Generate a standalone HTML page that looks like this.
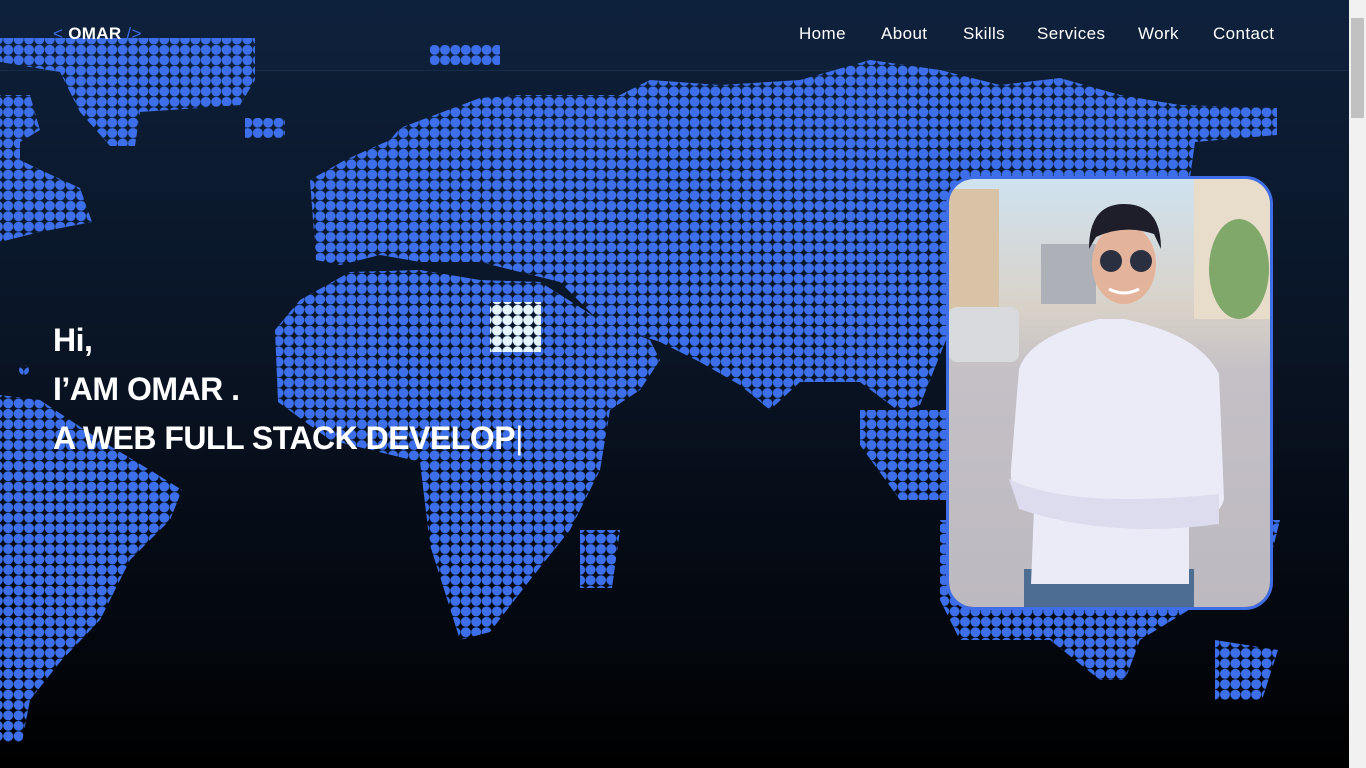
<!DOCTYPE html>
<html><head><meta charset="utf-8"><style>
html,body{margin:0;padding:0;width:1366px;height:768px;overflow:hidden;font-family:"Liberation Sans",sans-serif;}
body{background:linear-gradient(180deg,#0d1f38 0%,#0a1628 40%,#04080f 80%,#000 100%);position:relative}
.navbg{position:absolute;left:0;top:0;width:1349px;height:70px;background:rgba(20,40,70,0.25);border-bottom:1px solid rgba(40,70,110,0.35);z-index:0}
.nav{position:absolute;left:0;top:0;width:1349px;height:70px;z-index:3}
.logo{position:absolute;left:53px;top:24px;font-weight:bold;font-size:17px;color:#fff;letter-spacing:0.3px}
.logo .b{color:#3b6ee8;font-weight:normal}
.menu a{position:absolute;top:24px;color:#fff;font-size:17px;text-decoration:none;letter-spacing:0.4px}
.hero{position:absolute;left:53px;top:316px;color:#fff;font-weight:bold;font-size:32px;line-height:49px;z-index:3;letter-spacing:-0.5px}
.sb{position:absolute;right:0;top:0;width:17px;height:768px;background:#f1f1f1;z-index:4}
.sb div{position:absolute;left:2px;top:18px;width:13px;height:100px;background:#c1c1c1}
.photo{position:absolute;left:946px;top:176px;width:321px;height:428px;border:3px solid #3f6ee8;border-radius:28px;overflow:hidden;z-index:2}
</style></head><body>
<div class="navbg"></div>
<svg width="1366" height="768" style="position:absolute;left:0;top:0;z-index:1">
<defs>
<pattern id="d" width="10.4" height="10.4" patternUnits="userSpaceOnUse" x="3" y="3"><circle cx="5.2" cy="5.2" r="5" fill="#3c6fe9"/></pattern>
<pattern id="w" width="10.4" height="10.4" patternUnits="userSpaceOnUse" x="3" y="3"><circle cx="5.2" cy="5.2" r="5" fill="#e6f4fb"/></pattern>
</defs>
<g fill="url(#d)">
<polygon points="0,38 255,38 255,80 240,105 200,108 140,112 135,146 110,146 80,112 60,72 0,62"/>
<polygon points="245,118 285,118 285,138 245,138"/>
<polygon points="0,95 30,95 40,130 20,142 20,160 45,172 80,188 92,222 40,232 0,242"/>
<polygon points="0,395 40,400 100,440 150,470 182,490 170,520 130,560 100,620 60,662 30,700 22,742 0,742"/>
<polygon points="430,45 500,45 500,65 430,65"/>
<polygon points="310,180 345,160 390,140 400,128 480,98 520,95 620,95 650,80 720,85 800,80 870,60 940,70 1000,85 1060,78 1120,95 1180,105 1277,108 1277,135 1195,142 1190,178 1160,190 1100,182 1040,220 960,260 950,330 920,405 900,412 860,382 800,382 770,410 740,385 700,362 660,342 600,322 560,282 480,262 420,262 380,255 340,265 316,260"/>
<polygon points="300,300 350,272 420,270 480,280 540,282 600,320 650,340 660,360 640,390 610,410 600,470 570,530 530,580 490,632 460,640 430,545 420,462 330,440 278,402 275,330"/>
<polygon points="580,530 620,530 612,588 580,588"/>
<polygon points="860,410 960,410 960,500 900,500 860,445"/>
<polygon points="940,520 1280,520 1270,560 1140,640 1125,680 1100,680 1050,640 960,640 940,600"/>
<polygon points="1215,640 1278,650 1262,700 1215,700"/>
<circle cx="24" cy="370" r="5"/>
</g>
<polygon points="490,302 541,302 541,352 490,352" fill="url(#w)"/>
</svg>
<div class="nav">
<div class="logo"><span class="b">&lt;</span> OMAR <span class="b">/&gt;</span></div>
<div class="menu"><a style="left:799px">Home</a><a style="left:881px">About</a><a style="left:963px">Skills</a><a style="left:1037px">Services</a><a style="left:1138px">Work</a><a style="left:1213px">Contact</a></div>
</div>
<div class="hero">Hi,<br>I’AM OMAR .<br>A WEB FULL STACK DEVELOP<span style="font-weight:normal">|</span></div>
<div class="photo">
<svg width="321" height="428">
<defs>
<linearGradient id="bg" x1="0" y1="0" x2="0" y2="1"><stop offset="0" stop-color="#cfe2ef"/><stop offset="0.3" stop-color="#d9d2c8"/><stop offset="0.45" stop-color="#c4c0c6"/><stop offset="1" stop-color="#bdb9c0"/></linearGradient>
</defs>
<rect width="321" height="428" fill="url(#bg)"/>
<rect x="0" y="10" width="50" height="120" fill="#d8c3a6"/>
<rect x="245" y="0" width="76" height="140" fill="#e8dccb"/>
<ellipse cx="290" cy="90" rx="30" ry="50" fill="#7fa86a"/>
<rect x="92" y="65" width="55" height="60" fill="#aeb0b8"/>
<rect x="0" y="128" width="70" height="55" rx="8" fill="#d8dade"/>
<rect x="260" y="195" width="10" height="100" fill="#e8532a"/>
<rect x="75" y="390" width="170" height="40" fill="#4d6d92"/>
<path d="M70,190 Q80,158 150,140 L175,140 Q250,155 270,195 L275,320 Q270,340 240,345 L240,405 L82,405 L85,330 Q60,320 62,290 Z" fill="#ebebf8"/>
<path d="M60,300 Q120,330 270,315 L270,345 Q160,360 70,330 Z" fill="#dcdcee"/>
<ellipse cx="175" cy="85" rx="32" ry="40" fill="#e4b39c"/>
<path d="M140,70 Q140,25 175,25 Q212,25 212,70 L205,55 Q175,45 147,58 Z" fill="#1e1e2a"/>
<circle cx="162" cy="82" r="11" fill="#2a3040"/><circle cx="192" cy="82" r="11" fill="#2a3040"/>
<path d="M160,110 Q175,118 190,110" stroke="#fff" stroke-width="3" fill="none"/>
</svg>
</div>
<div class="sb"><div></div></div>
</body></html>
